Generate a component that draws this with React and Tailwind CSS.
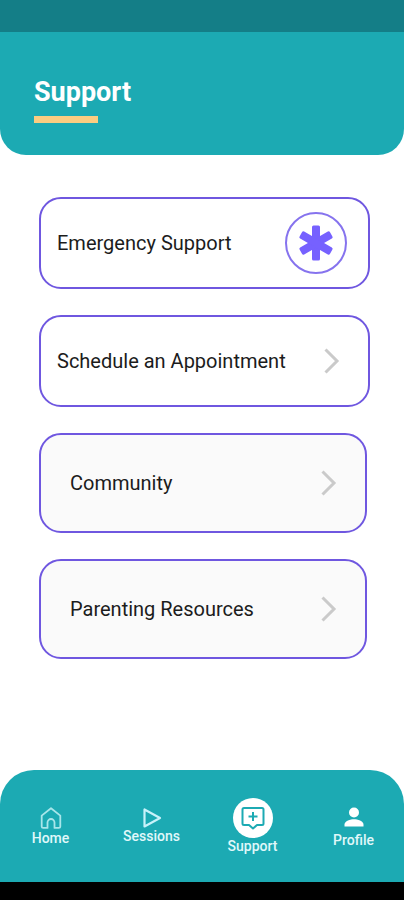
import React from 'react';

const cards = [
  { label: 'Emergency Support', icon: 'emergency' },
  { label: 'Schedule an Appointment', icon: 'chevron' },
  { label: 'Community', icon: 'chevron', shaded: true },
  { label: 'Parenting Resources', icon: 'chevron', shaded: true },
];

const Chevron = () => (
  <svg className='w-4 h-7 shrink-0' viewBox='0 0 16 28' fill='none' stroke='#cacaca' strokeWidth='3' aria-hidden='true'>
    <path d='M1.5 2.5 13 14 1.5 25.5' />
  </svg>
);

const EmergencyIcon = () => (
  <span className='flex items-center justify-center w-[62px] h-[62px] shrink-0 rounded-full border-2 border-[#8673ee]'>
    <svg className='w-9 h-9' viewBox='0 0 36 36' fill='#7661ff' aria-hidden='true'>
      <rect x='14' y='0.5' width='8' height='35' rx='1.5' />
      <rect x='14' y='0.5' width='8' height='35' rx='1.5' transform='rotate(60 18 18)' />
      <rect x='14' y='0.5' width='8' height='35' rx='1.5' transform='rotate(120 18 18)' />
    </svg>
  </span>
);

const HomeIcon = () => (
  <svg className='w-6 h-6' viewBox='0 0 24 24' fill='none' stroke='#a8e6ea' strokeWidth='1.8' strokeLinejoin='round' aria-hidden='true'>
    <path d='M2.7 9.6 12 2.2l9.3 7.4v10.8a1.5 1.5 0 0 1-1.5 1.5h-4.3v-5.4a3.5 3.5 0 0 0-7 0v5.4H4.2a1.5 1.5 0 0 1-1.5-1.5z' />
  </svg>
);

const SessionsIcon = () => (
  <svg className='w-5 h-5' viewBox='0 0 20 20' fill='none' stroke='#c8f2fa' strokeWidth='2.2' strokeLinejoin='round' aria-hidden='true'>
    <path d='M2.5 1.5v17L18 10z' />
  </svg>
);

const SupportIcon = () => (
  <span className='flex items-center justify-center w-10 h-10 rounded-full bg-white'>
    <svg className='w-6 h-6' viewBox='0 0 24 24' fill='none' stroke='#1caab3' strokeWidth='2' strokeLinejoin='round' aria-hidden='true'>
      <path d='M3 2h18a1.500 1.500 0 0 1 1.500 1.500v14A1.500 1.500 0 0 1 21 19h-5l-4 3.500L8 19H3a1.500 1.500 0 0 1-1.500-1.500v-14A1.500 1.500 0 0 1 3 2z' />
      <path d='M12 6v9M7.500 10.500h9' />
    </svg>
  </span>
);

const ProfileIcon = () => (
  <svg className='w-6 h-6' viewBox='0 0 24 24' fill='#fff' aria-hidden='true'>
    <circle cx='12' cy='8.5' r='5' />
    <path d='M2.5 22.5v-2C2.500 17 8.500 15.200 12 15.200s9.500 1.800 9.500 5.300v2z' />
  </svg>
);

const tabs = [
  { label: 'Home', icon: <HomeIcon /> },
  { label: 'Sessions', icon: <SessionsIcon /> },
  { label: 'Support', icon: <SupportIcon />, active: true },
  { label: 'Profile', icon: <ProfileIcon />, spaced: true },
];

const Card = ({ label, icon, shaded }) => (
  <button
    type='button'
    className={`flex items-center justify-between w-full rounded-[22px] border-2 border-[#6f57e0] text-left text-xl text-[#1c1c1c] cursor-pointer ${shaded ? 'h-[100px] pl-[29px] pr-7 bg-[#fafafa]' : `h-[92px] pl-4 bg-white ${icon === 'emergency' ? 'pr-[21px]' : 'pr-7'}`}`}
  >
    <span>{label}</span>
    {icon === 'emergency' ? <EmergencyIcon /> : <Chevron />}
  </button>
);

const App = () => {
  return (
    <div className="min-h-screen flex flex-col bg-white font-['Roboto',sans-serif]">
      {/* header */}
      <header className='bg-[#1caab3] rounded-b-[26px]'>
        <div className='h-8 bg-[#147e87]'></div>
        <div className='px-[34px] pt-11 pb-8'>
          <h1 className='text-[27px] leading-8 font-bold text-white'>Support</h1>
          <div className='mt-2 w-16 h-[7px] bg-[#fbcd81]'></div>
        </div>
      </header>

      {/* options */}
      <main className='grow flex flex-col gap-[26px] pl-[39px] pr-[34px] pt-[42px] pb-10'>
        {cards.map((card) => (
          <div key={card.label} className={card.shaded ? 'pr-[3px]' : ''}>
            <Card {...card} />
          </div>
        ))}
      </main>

      {/* bottom tabs */}
      <nav className='grid grid-cols-4 items-center h-28 rounded-t-[34px] bg-[#1caab3]'>
        {tabs.map((tab) => (
          <a
            key={tab.label}
            href='#'
            aria-current={tab.active ? 'page' : undefined}
            className='flex flex-col items-center text-sm leading-4 font-medium text-[#e0f8fa]'
          >
            {tab.icon}
            <span className={tab.spaced ? 'mt-1' : ''}>{tab.label}</span>
          </a>
        ))}
      </nav>
      <div className='h-[18px] bg-black'></div>
    </div>
  );
};

export default App;
